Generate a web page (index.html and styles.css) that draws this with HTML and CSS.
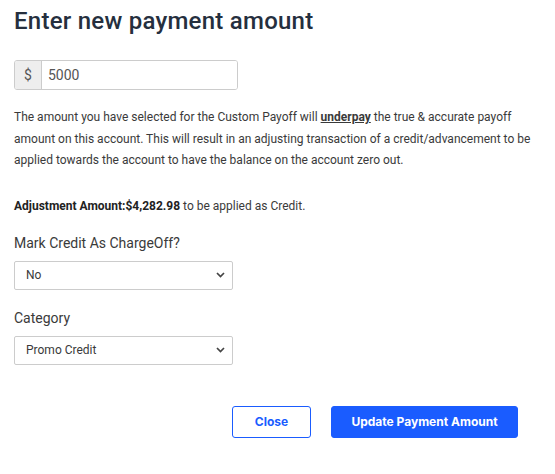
FILE: index.html
```html
<!DOCTYPE html>
<html>
<head>
<meta charset="utf-8">
<link rel="stylesheet" href="styles.css">
</head>
<body>
<div class="modal">
  <h1 class="title">Enter new payment amount</h1>
  <div class="input-group">
    <span class="addon">$</span>
    <input class="amount" type="text" value="5000">
  </div>
  <p class="desc">The amount you have selected for the Custom Payoff will <b class="under">underpay</b> the true &amp; accurate payoff amount on this account. This will result in an adjusting transaction of a credit/advancement to be applied towards the account to have the balance on the account zero out.</p>
  <p class="adjust"><b>Adjustment Amount:$4,282.98</b> to be applied as Credit.</p>
  <label class="label">Mark Credit As ChargeOff?</label>
  <div class="select"><span>No</span><svg width="9" height="6" viewBox="0 0 9 6"><path d="M1 1 L4.5 4.5 L8 1" fill="none" stroke="#444" stroke-width="1.7"/></svg></div>
  <label class="label cat">Category</label>
  <div class="select"><span>Promo Credit</span><svg width="9" height="6" viewBox="0 0 9 6"><path d="M1 1 L4.5 4.5 L8 1" fill="none" stroke="#444" stroke-width="1.7"/></svg></div>
  <div class="actions">
    <button class="btn btn-outline">Close</button>
    <button class="btn btn-primary">Update Payment Amount</button>
  </div>
</div>
</body>
</html>
```
FILE: styles.css
```css
html, body { margin: 0; padding: 0; background: #fff; }
body { font-family: Roboto, "Liberation Sans", sans-serif; color: #333; }
.modal { padding: 5px 14px 0 14px; width: 520px; }
.title { font-family: Roboto, sans-serif; font-size: 24px; font-weight: 500; color: #252f3e; margin: 0; line-height: 32px; letter-spacing: 0.25px; }
.input-group { display: flex; width: 224px; height: 30px; margin-top: 23px; border: 1px solid #ccc; border-radius: 3px; box-sizing: border-box; overflow: hidden; }
.addon { width: 26px; background: #eee; border-right: 1px solid #ccc; display: flex; align-items: center; justify-content: center; font-size: 14px; color: #555; }
.amount { flex: 1; border: 0; outline: none; font-family: Roboto, sans-serif; font-size: 14px; color: #555; padding: 0 0 0 6px; min-width: 0; }
.desc { font-size: 12px; line-height: 21.5px; margin: 17px 0 0; color: #3a3a3a; }
.under { text-decoration: underline; font-weight: 700; }
.adjust { font-size: 12px; margin: 25px 0 0; line-height: 18px; color: #3a3a3a; }
.adjust b { color: #222; }
.label { display: block; font-size: 14px; color: #3a3a3a; margin-top: 18px; line-height: 20px; }
.label.cat { margin-top: 18px; }
.select { width: 219px; height: 29px; box-sizing: border-box; border: 1px solid #ccc; border-radius: 2px; margin-top: 8px; display: flex; align-items: center; justify-content: space-between; padding: 0 7px 0 11px; font-size: 12px; color: #3a3a3a; }
.actions { display: flex; justify-content: flex-end; gap: 20px; margin-top: 41px; padding-right: 16px; }
.btn { height: 32px; border-radius: 3px; font-family: Inter, Roboto, sans-serif; font-weight: 700; font-size: 12px; box-sizing: border-box; cursor: pointer; }
.btn-outline { width: 79px; background: #fff; border: 1px solid #1a5cff; color: #1a5cff; }
.btn-primary { width: 187px; background: #1a5cff; border: 1px solid #1a5cff; color: #fff; }
```
